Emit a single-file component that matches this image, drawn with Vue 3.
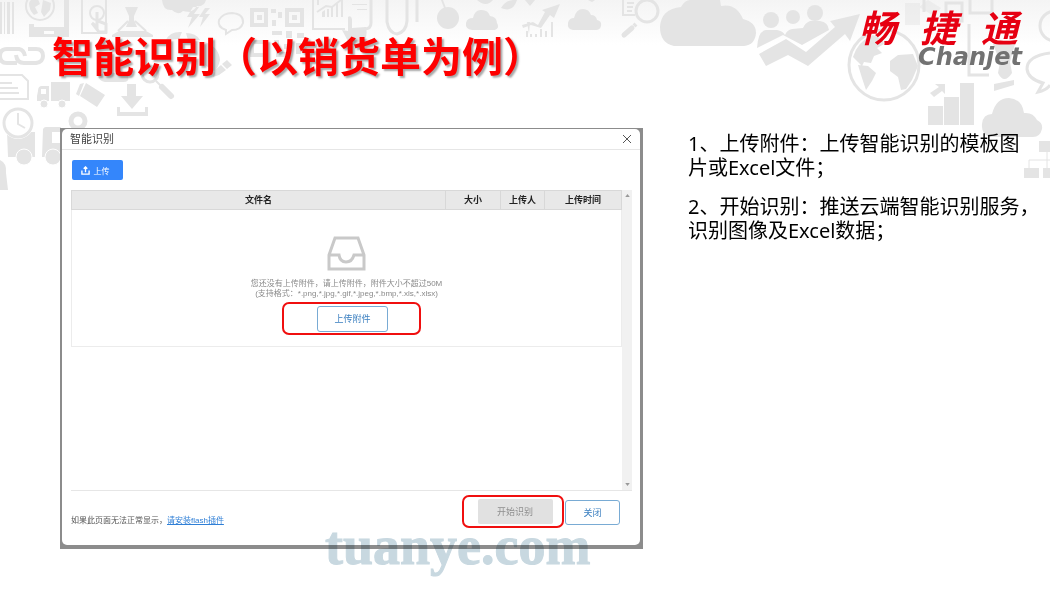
<script setup>
const columns = [
  { name: '文件名', cls: 'c-name' },
  { name: '大小', cls: 'c-size' },
  { name: '上传人', cls: 'c-user' },
  { name: '上传时间', cls: 'c-time' },
]
</script>

<template>
  <div class="slide">
    <svg class="backdrop" viewBox="0 0 1050 200" preserveAspectRatio="xMidYMin slice" aria-hidden="true">
      <defs>
        <linearGradient id="shade" x1="0" y1="0" x2="0" y2="1">
          <stop offset="0" stop-color="#f4f4f4" />
          <stop offset="1" stop-color="#fff" />
        </linearGradient>
      </defs>
      <rect width="1050" height="45" fill="url(#shade)" />
      <g class="fill">
        <!-- barcode -->
        <path d="M0 2h2v32H0zM4 2h1v32H4zM7 2h3v32H7zM12 2h2v32h-2z" />
        <!-- tablet -->
        <path fill-rule="evenodd" d="M29 24h5v3h30V0h5v37H29zM44 31v3h10v-3z" />
        <path d="M29 3q3-6 8-6l3 7-5 3 3 6-4 2q-5-5-5-12zM43 0l8 3-1 7-6 7-3-5z" />
        <!-- crane -->
        <path fill-rule="evenodd" d="M125 7h13l-4 9v4l3 7h-11l3-7v-4zM112 35l7-4h27l7 4v2h-41z" />
        <!-- storm cloud -->
        <path d="M162 0h44q-2 7-9 6-5 8-14 5-5 5-11-1-9 1-10-10zM193 7l-6 10h5l-4 11 12-14h-6l5-7zM205 8l-6 9h4l-3 10 10-13h-5l5-6z" />
        <!-- coded squares -->
        <path fill-rule="evenodd" d="M250 8h18v19h-18zM254 12v11h10V12zM285 8h19v19h-19zM289 12v11h11V12zM257 15h5v5h-5zM292 15h5v5h-5zM250 40h18v17h-18zM254 44v9h10v-9z" />
        <path d="M271 9h5v4h-5zM278 12h4v6h-4zM272 20h4v6h-4zM272 31h10v4h-10zM286 31h6v7h-6zM297 33h7v5h-7zM274 40h5v7h-5zM284 44h7v5h-7zM296 43h5v11h-5zM276 52h14v5h-14z" />
        <!-- van -->
        <path fill-rule="evenodd" d="M51 82h19v19H51zM38 91q0-5 4-5h7v15H37v-5zM41 89v5h5v-5z" />
        <!-- tag -->
        <path d="M80 84l4-1-5 13-3-2zM86 83l19 12-8 12-17-11z" />
        <!-- shapes behind the heading -->
        <path d="M98 76q8-7 30 0 2 6-5 6h-18q-6-1-7-6z" />
        <path d="M166 40q4-9 16-8l-3 7zM186 33q10 0 14 7h-12zM205 42q14 5 15 18-2 9-6 11l-9-6z" />
        <!-- pencil -->
        <path d="M213 77l2-7 6-5 5 5-7 5zM222 64l5-4 5 5-5 4z" />
        <!-- download -->
        <path d="M127 84h9v12h7l-11 13-11-13h6zM117 107h3v5h25v-5h3v9h-31z" />
        <!-- delivery truck -->
        <path fill-rule="evenodd" d="M7 132h28v25H8zM43 129q1-2 3-2h15v30H42zM52 132v11h9v-11z" />
        <path d="M0 160q7 3 6 13l2 17H0z" />
        <!-- hand -->
        <path d="M348 17q3-2 4 2v9l14-1q2 9-3 18h-13l-8-15 6 1z" />
        <path d="M322 12l3-2v7h-3zM327 9h2v8h-2zM331 7h2v10h-2zM336 4h2v13h-2zM352 4h15v1h-15zM357 9h10v1h-10z" />
        <!-- bauble -->
        <circle cx="448" cy="18" r="11" />
        <path d="M441 0h2l3 8h-2zM477 0h16q-7 8-16 0zM501 8q5-9 16-8-4 13-16 8zM527 22l3 0-1 12z" />
        <!-- small clouds -->
        <path d="M472 30q-7-1-6-7 1-5 7-5 2-9 9-8 6 0 8 6 7 1 7 7 3 5-2 7z" />
        <path d="M573 30q-6-1-5-7 1-5 6-5 2-9 9-9 6 0 8 6 5 0 6 5 5 1 4 6-1 4-5 4z" />
        <path d="M525 0h10l-5 6zM588 0h7l-3 2z" />
        <!-- growth chart -->
        <path d="M522 25l11-3 5 3 7-13-3-2 18-6-6 14-4-3-9 13-10-3-8 3zM526 31h2v6h-2zM530 34h2v3h-2zM535 34h2v3h-2zM540 29h2v8h-2zM545 31h2v6h-2zM551 22h2v15h-2z" />
        <!-- large cloud -->
        <path d="M674 46q-14-3-14-19 1-18 21-20 4-7 9-7h30l1 6q15-3 22 13 13 3 13 14-1 12-12 13z" />
        <!-- people and rising arrow -->
        <circle cx="771" cy="20" r="8" /><circle cx="793" cy="17" r="7" /><circle cx="815" cy="13" r="8" />
        <path d="M757 48q1-17 9-18h11q6 1 8 5 2-5 7-6l11-1q2-5 7-7h10q8 1 9 9l-27 15-19-10z" />
        <path d="M759 54l27-15 20 13 29-25-5-6 30-7-10 27-5-7-37 32-20-11-22 11z" />
        <!-- bars and arrow -->
        <path d="M928 106h15v19h-15zM944 97h15v28h-15zM960 83h14v42h-14zM930 93l9-6-4-3h10v10l-3-3-8 6z" />
        <!-- right cloud -->
        <path d="M991 137q-10-2-9-13 1-10 10-10 4-16 17-16 13 1 15 15 9-1 13 7 6 3 5 9-2 8-9 8z" />
        <!-- organisation chart -->
        <path d="M1039 141h11v11h-11zM1024 168h15v10h-15zM1043 168h7v10h-7z" />
        <!-- globe land -->
        <path d="M853 57q5-16 20-22l9 4 2 5-7 4 5 5-8 3-3 7-7-1-2 4-4-4zM858 65l10 1 8 7-4 8-6 9-4-12zM890 61l8-6 15-1 5 12-6 14-6 9-5 1-3-13-8-6z" />
        <path d="M993 44h22l-5 18 2 11q-8 12-14 0l2-11zM994 84l20-4v5l-20 6z" />
        <path d="M905 3h15v22h-15zM928 0l13 8-7 8-15-9z" opacity=".5" />
      </g>
      <g class="wheel">
        <circle cx="44" cy="104" r="4" /><circle cx="62" cy="104" r="4" />
        <circle cx="24" cy="157" r="8" /><circle cx="53" cy="157" r="8" />
      </g>
      <circle class="face" cx="18" cy="123" r="16" />
      <g class="stroke">
        <circle cx="40" cy="6" r="14" stroke-width="2" />
        <path d="M82 0v33h24V0M118 31l10-10m7 0l11 10" stroke-width="2" />
        <circle cx="97" cy="13" r="7" stroke-width="2" />
        <path d="M97 12v15l-5-4 7 9h7v-8l-8-3" stroke-width="3" />
        <path d="M226 30q-9-3-7-10 4-7 13-7 12 1 11 10-2 7-11 7l-6 4z" stroke-width="2" />
        <path d="M17 63H7q-7 0-7-7t7-7h12q5 1 6 7M16 55q1 8 8 8h12q7-1 7-7 0-7-7-7h-8" stroke-width="4" />
        <path d="M0 75h22l6 6v18H0M0 83h12M0 88h18M0 93h19" stroke-width="2" />
        <circle cx="18" cy="123" r="14" stroke-width="3" />
        <path d="M18 113v11l7 4" stroke-width="2" />
        <circle cx="78" cy="121" r="7" stroke-width="5" />
        <circle cx="150" cy="74" r="8" stroke-width="3" />
        <path d="M156 81l5 5" stroke-width="2" /><path d="M162 87l9 9" stroke-width="6" stroke-linecap="round" />
        <path d="M313 0v29h32M342 0v17M318 0v5M317 12l9-6 6 1 9-7" stroke-width="2" />
        <path d="M371 0v23q0 6-7 6M387 0v22q2 11 10 12 9-2 10-13V0M417 0v22" stroke-width="3" />
        <path d="M623 0v15h12M627 3h7M627 7h6M627 11h5" stroke-width="2" />
        <circle cx="647" cy="11" r="11" stroke-width="3" />
        <path d="M636 24l-2 2" stroke-width="4" />
        <path d="M632 28l-8 7" stroke-width="5" stroke-linecap="round" />
        <circle cx="884" cy="65" r="35" stroke-width="3" />
        <path d="M924 0v12M969 24v51h20M970 0v13h22V0M946 3h16v18h-16z" stroke-width="3" />
        <circle cx="1055" cy="26" r="15" stroke-width="3" />
        <path d="M1050 53q-23 3-23 16 1 10 16 14l-5 9q9-2 12-7" stroke-width="3" />
        <path d="M1029 168v-8h21M1047 152v16" stroke-width="1" />
      </g>
    </svg>

    <header class="top">
      <h1>智能识别（以销货单为例）</h1>
      <div class="brand">
        <div class="brand-cn"><span>畅</span><span>捷</span><span>通</span></div>
        <div class="brand-en">Chanjet</div>
      </div>
    </header>

    <main class="content">
      <section class="dialog" aria-labelledby="dlg-title">
        <div class="sheet">
          <div class="bar">
            <h2 id="dlg-title">智能识别</h2>
            <button class="close" type="button" aria-label="关闭窗口">
              <svg viewBox="0 0 10 10"><path d="M1 1l8 8M9 1l-8 8" /></svg>
            </button>
          </div>

          <div class="tools">
            <button class="upload" type="button">
              <svg viewBox="0 0 10 10"><path d="M1 5v4h8V5M5 7V2M3 3l2-2 2 2" /></svg>
              上传
            </button>
          </div>

          <div class="list">
            <table>
              <thead>
                <tr><th v-for="c in columns" :key="c.name" :class="c.cls">{{ c.name }}</th></tr>
              </thead>
              <tbody>
                <tr>
                  <td colspan="4">
                    <div class="empty">
                      <svg viewBox="0 0 39 35">
                        <path d="M2 19L8 2h23l6 17v14H2zM2 19h10q1 7 7 7t8-7h10" />
                      </svg>
                      <p>您还没有上传附件，请上传附件，附件大小不超过50M<br>(支持格式：*.png,*.jpg,*.gif,*.jpeg,*.bmp,*.xls,*.xlsx)</p>
                      <div class="mark mark-attach">
                        <button class="outline attach" type="button">上传附件</button>
                      </div>
                    </div>
                  </td>
                </tr>
              </tbody>
            </table>
            <div class="scroll" aria-hidden="true">
              <svg viewBox="0 0 6 4"><path d="M0 4l3-4 3 4z" /></svg>
              <svg viewBox="0 0 6 4"><path d="M0 0l3 4 3-4z" /></svg>
            </div>
          </div>

          <div class="foot">
            <p class="hint">如果此页面无法正常显示，<a href="#">请安装flash插件</a></p>
            <div class="mark mark-start">
              <button class="start" type="button" disabled>开始识别</button>
            </div>
            <button class="outline shut" type="button">关闭</button>
          </div>
        </div>
        <div class="watermark">tuanye.com</div>
      </section>

      <aside class="notes">
        <p>1、上传附件：上传智能识别的模板图<br>片或Excel文件；</p>
        <p>2、开始识别：推送云端智能识别服务，<br>识别图像及Excel数据；</p>
      </aside>
    </main>
  </div>
</template>

<style>
body {
  margin: 0;
  background: #fff;
}
</style>

<style scoped>
.slide {
  position: relative;
  min-height: 100vh;
  overflow: hidden;
  background: #fff;
  font-family: "Noto Sans", "Noto Sans CJK SC", sans-serif;
  color: #000;
}
.backdrop {
  position: absolute;
  top: 0;
  left: 0;
  width: 100%;
}
.fill { fill: #e4e4e4; }
.stroke { fill: none; stroke: #e4e4e4; }
.wheel { fill: #e4e4e4; stroke: #fff; stroke-width: 1; }
.face { fill: #fff; }
h1, h2, p { margin: 0; }
button {
  font-family: inherit;
  padding: 0;
  margin: 0;
  box-sizing: border-box;
}
.top {
  position: relative;
  display: flex;
  justify-content: space-between;
  align-items: flex-start;
  height: 128px;
  padding: 0 28px 0 52px;
  box-sizing: border-box;
}
h1 {
  margin-top: 24px;
  font: bold 41px/60px "Noto Sans CJK SC", sans-serif;
  color: #fe0000;
  text-shadow: 2px 2px 2px rgba(0, 0, 0, 0.35);
  white-space: nowrap;
}
.brand { padding-top: 6px; }
.brand-cn {
  display: flex;
  justify-content: flex-end;
  gap: 24px;
  padding-right: 4px;
  font: italic bold 37px/40px "Noto Sans CJK SC", sans-serif;
  color: #e60012;
}
.brand-en {
  text-align: right;
  font: italic bold 24px/22px "DejaVu Sans", sans-serif;
  color: #727272;
}
.content {
  position: relative;
  display: grid;
  grid-template-columns: 583fr 362fr;
  column-gap: 45px;
  padding-left: 60px;
  align-items: start;
}
.dialog {
  position: relative;
  padding: 1px 3px 4px 2px;
  background: #8c8c8c;
}
.sheet {
  background: #fff;
  border-radius: 5px;
}
.bar {
  display: flex;
  justify-content: space-between;
  align-items: center;
  height: 20px;
  padding: 0 8px;
  border-bottom: 1px solid #e6e6e6;
}
h2 {
  font-size: 11px;
  line-height: 20px;
  font-weight: normal;
  color: #444;
}
.close {
  display: flex;
  border: 0;
  background: none;
}
.close svg { width: 10px; height: 10px; }
.close path { stroke: #555; fill: none; stroke-width: 1; }
.tools { padding: 10px; }
.upload {
  display: flex;
  align-items: center;
  justify-content: center;
  gap: 4px;
  width: 51px;
  height: 20px;
  padding-right: 5px;
  border: 0;
  border-radius: 2px;
  background: #3486fb;
  color: #fff;
  font-size: 8px;
}
.upload svg { width: 9px; height: 9px; }
.upload path { fill: none; stroke: #fff; stroke-width: 1.5; }
.list {
  display: flex;
  align-items: stretch;
  height: 300px;
  margin: 0 8px 0 9px;
  border-bottom: 1px solid #e6e6e6;
}
table {
  flex: 1;
  align-self: flex-start;
  table-layout: fixed;
  border-collapse: collapse;
}
th {
  height: 18px;
  padding: 0;
  background: #e8e8e8;
  border: 1px solid #d8d8d8;
  font-size: 9px;
  line-height: 12px;
  color: #222;
}
.c-name { width: 68%; }
.c-size { width: 10%; }
.c-user { width: 8%; }
.c-time { width: 14%; }
td {
  padding: 0;
  border: 1px solid #ececec;
}
.empty {
  display: flex;
  flex-direction: column;
  align-items: center;
  padding: 26px 0 11px;
}
.empty > svg { width: 39px; height: 35px; }
.empty path { fill: none; stroke: #c9c9c9; stroke-width: 3; }
.empty p {
  margin-top: 8px;
  font-family: "Liberation Sans", "Noto Sans CJK SC", sans-serif;
  font-size: 8px;
  line-height: 10px;
  text-align: center;
  color: #8a8a8a;
}
.mark {
  display: flex;
  align-items: center;
  justify-content: center;
  box-sizing: border-box;
  height: 33px;
  border: 2px solid #f00f0f;
  border-radius: 7px;
}
.mark-attach {
  width: 139px;
  margin: 3px 0 0 10px;
  padding-left: 2px;
}
.outline {
  border: 1px solid #79abd4;
  border-radius: 3px;
  background: #fff;
  color: #3a7fc0;
  font-size: 9px;
}
.attach { width: 71px; height: 26px; }
.scroll {
  display: flex;
  flex-direction: column;
  justify-content: space-between;
  align-items: center;
  width: 10px;
  padding: 4px 0;
  box-sizing: border-box;
  background: #f1f1f1;
}
.scroll svg { width: 5px; height: 3px; fill: #999; }
.foot {
  display: flex;
  align-items: flex-start;
  padding: 4px 20px 17px 9px;
}
.hint {
  flex: 1;
  padding-top: 20px;
  font-family: "Liberation Sans", "Noto Sans CJK SC", sans-serif;
  font-size: 8px;
  line-height: 12px;
  color: #555;
}
.hint a { color: #2f7fd6; }
.mark-start {
  width: 102px;
  padding-left: 4px;
}
.start {
  width: 75px;
  height: 25px;
  border: 0;
  border-radius: 2px;
  background: #e1e1e1;
  color: #8f8f8f;
  font-size: 9px;
}
.shut {
  width: 55px;
  height: 25px;
  margin: 5px 0 0 1px;
}
.watermark {
  position: absolute;
  left: 265px;
  bottom: -27px;
  font: bold 54px/60px "Liberation Serif", serif;
  color: #c8d8e0;
  -webkit-text-stroke: 1px #c8d8e0;
  mix-blend-mode: multiply;
  pointer-events: none;
}
.notes {
  padding-top: 4px;
  font-size: 20px;
  line-height: 24px;
  white-space: nowrap;
}
.notes p + p { margin-top: 15px; }
</style>
